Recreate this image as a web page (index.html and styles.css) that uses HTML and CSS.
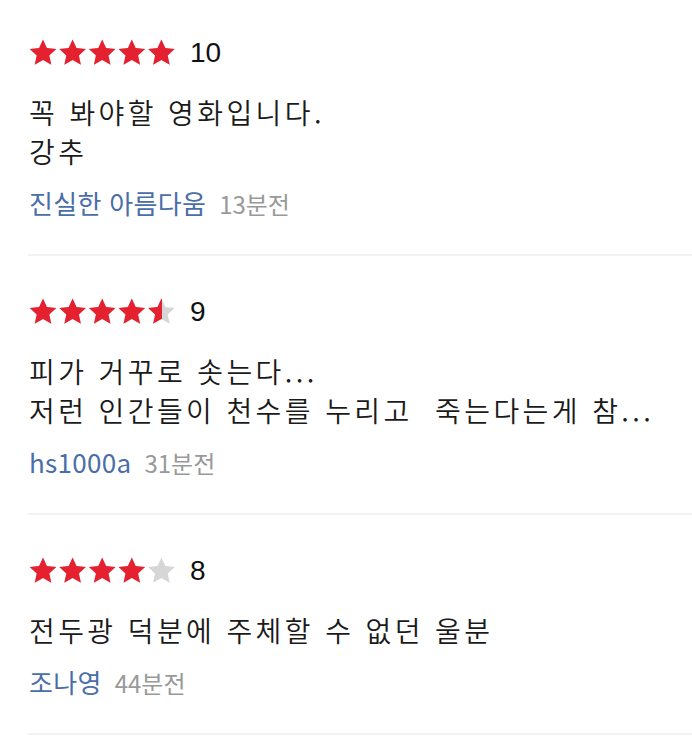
FILE: index.html
```html
<!DOCTYPE html>
<html lang="ko">

<head>
    <meta charset="UTF-8">
    <meta name="viewport" content="width=device-width, initial-scale=1.0">
    <title>관람평</title>
    <link rel="stylesheet" href="styles.css">
</head>

<body>
    <svg class="defs" width="0" height="0">
        <defs>
            <symbol id="five" viewBox="0 0 148 28">
                <path id="star" d="M14 0.5l3.9 8.6 9.4 1-7 6.4 2 9.3L14 21l-8.3 4.8 2-9.3-7-6.4 9.4-1z" />
                <use href="#star" x="29.6" />
                <use href="#star" x="59.2" />
                <use href="#star" x="88.8" />
                <use href="#star" x="118.4" />
            </symbol>
        </defs>
    </svg>

    <ul class="reviews">
        <li class="review first">
            <div class="score">
                <div class="stars">
                    <svg class="stars-bg" width="148" height="28"><use href="#five" /></svg>
                    <div class="stars-fill" style="width: 100%;">
                        <svg width="148" height="28"><use href="#five" /></svg>
                    </div>
                </div>
                <span class="num">10</span>
            </div>
            <p class="text">꼭 봐야할 영화입니다.<br>강추</p>
            <div class="meta">
                <span class="author">진실한 아름다움</span>
                <span class="time">13분전</span>
            </div>
        </li>
        <li class="review">
            <div class="score">
                <div class="stars">
                    <svg class="stars-bg" width="148" height="28"><use href="#five" /></svg>
                    <div class="stars-fill" style="width: 90%;">
                        <svg width="148" height="28"><use href="#five" /></svg>
                    </div>
                </div>
                <span class="num">9</span>
            </div>
            <p class="text">피가 거꾸로 솟는다...<br>저런 인간들이 천수를 누리고&nbsp; 죽는다는게 참...</p>
            <div class="meta">
                <span class="author">hs1000a</span>
                <span class="time">31분전</span>
            </div>
        </li>
        <li class="review">
            <div class="score">
                <div class="stars">
                    <svg class="stars-bg" width="148" height="28"><use href="#five" /></svg>
                    <div class="stars-fill" style="width: 80%;">
                        <svg width="148" height="28"><use href="#five" /></svg>
                    </div>
                </div>
                <span class="num">8</span>
            </div>
            <p class="text">전두광 덕분에 주체할 수 없던 울분</p>
            <div class="meta">
                <span class="author">조나영</span>
                <span class="time">44분전</span>
            </div>
        </li>
    </ul>
</body>

</html>
```
FILE: styles.css
```css
body {
    margin: 0;
    background-color: white;
    font-family: "Noto Sans CJK KR", "Noto Sans", sans-serif;
}

.defs {
    position: absolute;
}

.reviews {
    list-style: none;
    margin: 0;
    padding: 0 0 0 28px;
}

.review {
    padding: 41px 0 36px 1px;
    border-bottom: 2px solid #f2f2f2;
}

.review.first {
    padding-top: 38px;
}

.score {
    display: flex;
    align-items: center;
    height: 30px;
}

.stars {
    position: relative;
    width: 148px;
    height: 28px;
}

.stars-bg {
    display: block;
    fill: #d6d6d6;
}

.stars-fill {
    position: absolute;
    top: 0;
    left: 0;
    height: 28px;
    overflow: hidden;
    fill: #e5202f;
}

.num {
    margin-left: 13px;
    font-family: "Liberation Sans", Arial, sans-serif;
    font-size: 28px;
    color: #111;
}

.text {
    margin: 25px 0 0;
    font-size: 28px;
    font-weight: 350;
    line-height: 39px;
    letter-spacing: 3.4px;
    color: #1a1a1a;
}

.meta {
    display: flex;
    align-items: baseline;
    margin-top: 17px;
    height: 30px;
    line-height: 30px;
}

.author {
    font-size: 26px;
    letter-spacing: 0.3px;
    color: #4a6ea8;
}

.time {
    margin-left: 13px;
    font-size: 24px;
    color: #999;
}
```
